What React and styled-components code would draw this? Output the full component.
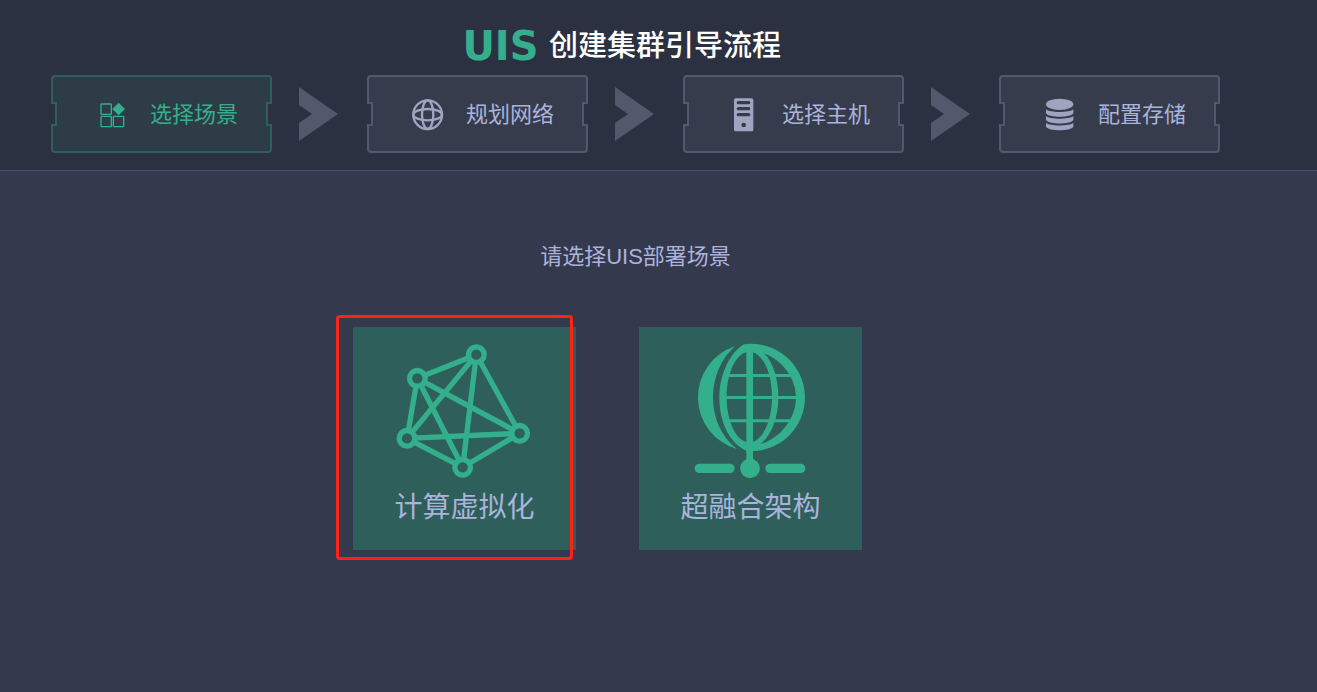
import React, { useState } from "react";
import styled, { createGlobalStyle } from "styled-components";

const GlobalStyle = createGlobalStyle`
  *,
  *::before,
  *::after {
    box-sizing: border-box;
  }

  body {
    margin: 0;
    background: #35394e;
    color: #a9b3db;
    font-family: "Liberation Sans", "Noto Sans CJK SC", sans-serif;
  }

  button {
    font-family: inherit;
    cursor: pointer;
  }
`;

//Header
const Header = styled.header`
  display: flex;
  flex-direction: column;
  align-items: center;
  padding: 24px 46px 17px 0;
  background: #2c3141;
  border-bottom: 1px solid #4b4f66;
`;

const Title = styled.h1`
  display: flex;
  align-items: center;
  gap: 8px;
  height: 44px;
  margin: 0 30px 7px 0;
  color: #fff;
  font-size: 29px;
  font-weight: 500;
  line-height: 44px;
  white-space: nowrap;
`;

const Brand = styled.span`
  min-width: 81px;
  color: #34af8b;
  font-family: "DejaVu Sans", sans-serif;
  font-size: 40px;
  font-weight: 700;
  line-height: 40px;
  text-align: center;
`;

//Steps
const Steps = styled.ol`
  display: flex;
  align-items: center;
  justify-content: center;
  gap: 29px;
  margin: 0;
  padding: 0;
  list-style: none;
`;

const StepItem = styled.li`
  display: flex;
  align-items: center;
  gap: 27px;
`;

const StepButton = styled.button`
  --line: ${({ $active }) => ($active ? "#2e605b" : "#53586c")};
  position: relative;
  display: flex;
  align-items: center;
  gap: 22px;
  width: 221px;
  height: 78px;
  padding: 2px 0 0 43px;
  border: 2px solid var(--line);
  border-radius: 4px;
  background: ${({ $active }) => ($active ? "#2e3c48" : "#373c4c")};
  color: ${({ $active }) => ($active ? "#34af8b" : "#a9b3db")};
  font-size: 22px;
  line-height: 32px;
  white-space: nowrap;

  /* notches cut into both sides */
  &::before,
  &::after {
    content: "";
    position: absolute;
    top: 25px;
    width: 6px;
    height: 24px;
    border: 2px solid var(--line);
    background: #2c3141;
  }

  &::before {
    left: -2px;
    border-left: none;
  }

  &::after {
    right: -2px;
    border-right: none;
  }
`;

const StepIcon = styled.svg`
  flex: none;
  width: 32px;
  height: 34px;
  color: ${({ $active }) => ($active ? "#34af8b" : "#9fa5c1")};
`;

const Arrow = styled.svg`
  flex: none;
  width: 39px;
  height: 54px;
  fill: #53586c;
`;

//Scenes
const Main = styled.main`
  display: flex;
  flex-direction: column;
  align-items: center;
  padding: 70px 46px 40px 0;
`;

const Prompt = styled.p`
  margin: 0 0 54px;
  font-size: 22px;
  line-height: 32px;
`;

const Scenes = styled.div`
  display: flex;
  gap: 63px;
  margin-right: 56px;
`;

const SceneButton = styled.button`
  position: relative;
  display: flex;
  flex-direction: column;
  align-items: center;
  gap: 9px;
  width: 223px;
  padding: 17px 0 22px;
  border: none;
  background: #2f5f5b;
  color: #a9b3db;
  font-size: 28px;
  line-height: 40px;
`;

const SceneIcon = styled.svg`
  width: 135px;
  height: 135px;
  overflow: visible;
  color: #34af8b;
`;

const Highlight = styled.span`
  position: absolute;
  top: -12px;
  left: -17px;
  width: 237px;
  height: 245px;
  border: 3px solid #ff2314;
  border-radius: 4px;
  pointer-events: none;
`;

const SceneGlyph = () => (
  <g>
    <g fill="none" stroke="currentColor" strokeWidth="4">
      <rect x="15" y="18" width="31" height="31" rx="2" />
      <rect x="15" y="55" width="31" height="31" rx="2" />
      <rect x="52" y="55" width="31" height="31" rx="2" />
    </g>
    <path d="M68 14 87 33 68 52 49 33z" fill="currentColor" />
  </g>
);

const NetworkGlyph = () => (
  <g fill="none" stroke="currentColor" strokeWidth="7">
    <circle cx="47" cy="50" r="43" />
    <ellipse cx="47" cy="50" rx="17" ry="43" />
    <ellipse cx="47" cy="50" rx="43" ry="17" />
  </g>
);

const HostGlyph = () => (
  <path
    fill="currentColor"
    fillRule="evenodd"
    d="M23 1h48a5 5 0 0 1 5 5v89a5 5 0 0 1-5 5H23a5 5 0 0 1-5-5V6a5 5 0 0 1 5-5z
      M31 9a5 5 0 0 0 0 10h31a5 5 0 0 0 0-10z
      M31 27a5 5 0 0 0 0 10h31a5 5 0 0 0 0-10z
      M31 45a5 5 0 0 0 0 10h31a5 5 0 0 0 0-10z
      M47 74a7 7 0 0 0 0 14 7 7 0 0 0 0-14z"
  />
);

const StorageGlyph = () => (
  <g fill="currentColor">
    <ellipse cx="47" cy="19" rx="41" ry="17" />
    {[0, 20, 40].map((y) => (
      <path
        key={y}
        transform={`translate(0 ${y})`}
        d="M6 34C16 45 78 45 88 34V46C80 60 14 60 6 46z"
      />
    ))}
  </g>
);

const ClusterGlyph = () => {
  const nodes = [
    [440, 134],
    [263, 205],
    [232, 385],
    [570, 370],
    [399, 472],
  ];

  return (
    <g stroke="currentColor" strokeWidth="16">
      {nodes.map(([x1, y1], i) =>
        nodes
          .slice(i + 1)
          .map(([x2, y2]) => (
            <line key={`${x1}-${x2}`} x1={x1} y1={y1} x2={x2} y2={y2} />
          ))
      )}
      {nodes.map(([cx, cy]) => (
        <circle key={cx} cx={cx} cy={cy} r="23.5" fill="#2f5f5b" />
      ))}
    </g>
  );
};

const GlobeGlyph = () => (
  <g fill="currentColor">
    <path d="M318 79A161 161 0 0 0 324 387C276 350 252 292 252 233C252 172 276 116 318 79z" />
    <path
      fillRule="evenodd"
      d="M345 73A161 161 0 1 1 354 393C301 370 271 306 271 233C271 166 301 99 345 73z
        M361 95C323 95 293 156 293 231S323 367 361 367 429 306 429 231 399 95 361 95z
        M405 100C462 122 501 176 501 233S458 354 395 372C430 342 448 290 448 233S432 126 405 100z"
    />
    <path d="M352 80h20v350h-20z" />
    <path d="M300 162h187v9H300zM290 228h214v9H290zM300 298h187v9H300z" />
    <circle cx="363" cy="445" r="29.5" />
    <rect x="197" y="431" width="120" height="28" rx="14" />
    <rect x="409" y="431" width="120" height="28" rx="14" />
  </g>
);

const steps = [
  { id: "scene", label: "选择场景", Glyph: SceneGlyph },
  { id: "network", label: "规划网络", Glyph: NetworkGlyph },
  { id: "host", label: "选择主机", Glyph: HostGlyph },
  { id: "storage", label: "配置存储", Glyph: StorageGlyph },
];

const scenes = [
  {
    id: "compute",
    label: "计算虚拟化",
    viewBox: "202 102 405 405",
    Glyph: ClusterGlyph,
  },
  {
    id: "hci",
    label: "超融合架构",
    viewBox: "162 72 405 405",
    Glyph: GlobeGlyph,
  },
];

const App = () => {
  const [step, setStep] = useState("scene");
  const [scene, setScene] = useState("compute");

  return (
    <>
      <GlobalStyle />
      <Header>
        <Title>
          <Brand>UIS</Brand>
          创建集群引导流程
        </Title>
        <Steps>
          {steps.map(({ id, label, Glyph }, index) => (
            <StepItem key={id}>
              <StepButton
                type="button"
                $active={id === step}
                aria-current={id === step ? "step" : undefined}
                onClick={() => setStep(id)}
              >
                <StepIcon
                  $active={id === step}
                  viewBox="0 0 96 102"
                  aria-hidden="true"
                >
                  <Glyph />
                </StepIcon>
                {label}
              </StepButton>
              {index < steps.length - 1 && (
                <Arrow viewBox="0 0 39 54" aria-hidden="true">
                  <path d="M0 0 39 27 0 54V36L13 27 0 18z" />
                </Arrow>
              )}
            </StepItem>
          ))}
        </Steps>
      </Header>
      <Main>
        <Prompt>请选择UIS部署场景</Prompt>
        <Scenes>
          {scenes.map(({ id, label, viewBox, Glyph }) => (
            <SceneButton
              key={id}
              type="button"
              aria-pressed={id === scene}
              onClick={() => setScene(id)}
            >
              <SceneIcon viewBox={viewBox} aria-hidden="true">
                <Glyph />
              </SceneIcon>
              {label}
              {id === scene && <Highlight />}
            </SceneButton>
          ))}
        </Scenes>
      </Main>
    </>
  );
};

export default App;
